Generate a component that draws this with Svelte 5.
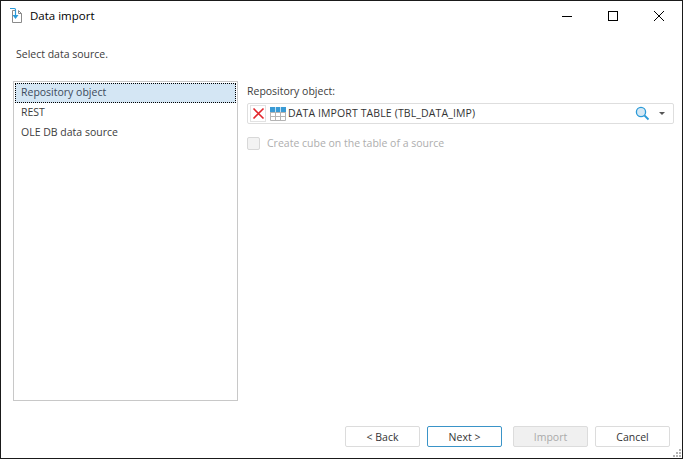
<script>
  const sources = ['Repository object', 'REST', 'OLE DB data source'];
</script>

<div class="window">
  <header class="titlebar">
    <svg class="appicon" width="14" height="18" viewBox="0 0 14 18">
      <path d="M6 3.5H2.5V15.5H11.5V6.5L8.5 3.5V6.5H11.5" fill="none" stroke="#8a8a8a"/>
      <path d="M0 1.5H4.5C5.2 1.5 5.5 2 5.5 2.8V10" fill="none" stroke="#2a9ad8" stroke-width="1.2"/>
      <path d="M2.5 8L5.5 12L8.5 8Z" fill="#2a9ad8"/>
    </svg>
    <span class="title">Data import</span>
    <div class="controls">
      <svg width="46" height="30" viewBox="0 0 46 30"><path d="M18 15.5H28" stroke="#000"/></svg>
      <svg width="46" height="30" viewBox="0 0 46 30"><rect x="18.5" y="10.5" width="9" height="9" fill="none" stroke="#000"/></svg>
      <svg width="46" height="30" viewBox="0 0 46 30"><path d="M18 10L28 20M28 10L18 20" stroke="#000"/></svg>
    </div>
  </header>

  <p class="prompt">Select data source.</p>

  <div class="content">
    <ul class="list">
      {#each sources as s, i}
        <li class:selected={i === 0}>{s}</li>
      {/each}
    </ul>

    <section class="panel">
      <div class="label">Repository object:</div>
      <div class="combo">
        <span class="clear">
          <svg width="13" height="13" viewBox="0 0 13 13"><path d="M1.5 1.5L11.5 11.5M11.5 1.5L1.5 11.5" stroke="#e2262c" stroke-width="1.6"/></svg>
        </span>
        <svg class="tableicon" width="16" height="14" viewBox="0 0 16 14">
          <rect x="0" y="0" width="16" height="5" fill="#3a9bd5"/>
          <path d="M0.5 5V13.5H15.5V5M0.5 5.5H15.5M0.5 9.5H15.5M5.5 5V13M10.5 5V13" fill="none" stroke="#b4b4b4"/>
          <path d="M5.5 0V5M10.5 0V5" stroke="#bfe0f3"/>
        </svg>
        <span class="value">DATA IMPORT TABLE (TBL_DATA_IMP)</span>
        <svg class="search" width="15" height="15" viewBox="0 0 15 15">
          <circle cx="6" cy="6" r="4.6" fill="#d5e8f4" stroke="#2a9ad8" stroke-width="1.3"/>
          <path d="M9.5 9.5L13.5 13.5" stroke="#2a9ad8" stroke-width="1.8"/>
        </svg>
        <span class="arrow"></span>
      </div>
      <label class="check">
        <span class="box"></span>
        <span>Create cube on the table of a source</span>
      </label>
    </section>
  </div>

  <footer class="buttons">
    <div class="group">
      <button class="btn">&lt; Back</button>
      <button class="btn primary">Next &gt;</button>
    </div>
    <div class="group">
      <button class="btn disabled">Import</button>
      <button class="btn">Cancel</button>
    </div>
  </footer>

  <svg class="grip" width="10" height="10" viewBox="0 0 10 10" fill="#b4b4b4">
    <rect x="7" y="1" width="2" height="2"/>
    <rect x="4" y="4" width="2" height="2"/><rect x="7" y="4" width="2" height="2"/>
    <rect x="1" y="7" width="2" height="2"/><rect x="4" y="7" width="2" height="2"/><rect x="7" y="7" width="2" height="2"/>
  </svg>
</div>

<style>
  :global(body) { margin: 0; }
  .window {
    position: relative;
    box-sizing: border-box;
    width: 683px;
    height: 459px;
    background: #fff;
    border: 1px solid #1a1a1a;
    display: flex;
    flex-direction: column;
    font-family: "Open Sans", sans-serif;
    font-size: 10.5px;
    color: #3c3c3c;
    overflow: hidden;
  }
  .titlebar {
    display: flex;
    align-items: center;
    height: 30px;
    flex: none;
  }
  .appicon { margin-left: 9px; flex: none; }
  .title { margin: 0 0 2px 6px; font-size: 11.5px; color: #000; }
  .controls { margin-left: auto; display: flex; }
  .controls svg { display: block; }
  .prompt { margin: 17px 0 0 15px; line-height: 13px; }
  .content {
    display: flex;
    margin: 20px 8px 0 12px;
    gap: 9px;
    height: 320px;
    flex: none;
  }
  .list {
    list-style: none;
    margin: 0;
    padding: 1px;
    width: 225px;
    box-sizing: border-box;
    border: 1px solid #c8c8c8;
  }
  .list li {
    height: 20px;
    line-height: 18px;
    padding-left: 6px;
    box-sizing: border-box;
  }
  .list li.selected {
    background: #d4e6f4;
    outline: 1px dotted #000;
    outline-offset: -1px;
    color: #3c4a5c;
  }
  .panel { flex: 1; min-width: 0; }
  .label { line-height: 14px; margin-top: 3px; }
  .combo {
    display: flex;
    align-items: center;
    height: 21px;
    margin-top: 5px;
    box-sizing: border-box;
    border: 1px solid #dedede;
    border-radius: 2px;
    padding-left: 2px;
    color: #333;
  }
  .clear {
    width: 16px;
    height: 17px;
    box-sizing: border-box;
    border: 1px solid #e2e2e2;
    display: flex;
    align-items: center;
    justify-content: center;
    flex: none;
  }
  .tableicon { margin-left: 4px; flex: none; }
  .value { margin: 0 0 2px 2px; white-space: nowrap; letter-spacing: 0.12px; }
  .search { margin-left: auto; flex: none; }
  .arrow {
    margin: 0 8px 0 9px;
    width: 0;
    height: 0;
    border-left: 3px solid transparent;
    border-right: 3px solid transparent;
    border-top: 3px solid #555;
    flex: none;
  }
  .check {
    display: flex;
    align-items: center;
    gap: 7px;
    margin-top: 12px;
    color: #aeaeae;
  }
  .box {
    width: 13px;
    height: 13px;
    box-sizing: border-box;
    border: 1px solid #d8d8d8;
    border-radius: 2px;
    background: #f3f3f3;
  }
  .buttons {
    display: flex;
    justify-content: flex-end;
    gap: 11px;
    margin-top: auto;
    padding: 0 12px 11px 0;
  }
  .group { display: flex; gap: 7px; }
  .btn {
    width: 75px;
    height: 21px;
    padding: 0;
    background: #fff;
    border: 1px solid #dcdcdc;
    border-radius: 2px;
    font: inherit;
    color: #333;
  }
  .btn.primary { border-color: #3a94c8; }
  .btn.disabled { background: #f0f0f0; color: #aaa; }
  .grip { position: absolute; right: 0; bottom: 0; }
</style>
